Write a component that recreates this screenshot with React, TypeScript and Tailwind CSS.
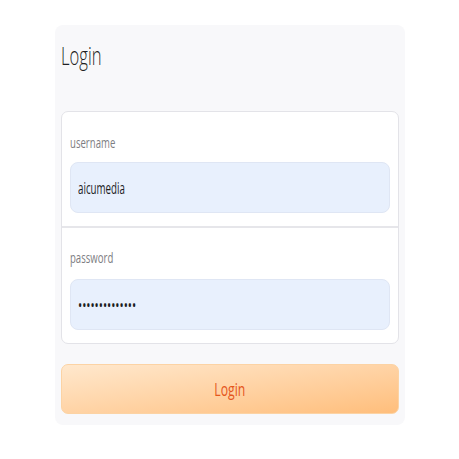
function Field({ label, value, top, gap, valueClass }: { label: string; value: string; top: string; gap: string; valueClass: string }) {
  return (
    <div className={`px-[8px] ${top} pb-[13px]`}>
      <div className="h-[20px] text-[15px] leading-[20px] text-[#7d7d82]">
        <span className="inline-block origin-left scale-x-[0.64] whitespace-nowrap">{label}</span>
      </div>
      <div className={`${gap} h-[51px] rounded-[8px] border border-[#dfe6f4] bg-[#e8f0fd] px-[7px] flex items-center`}>
        <span className={`inline-block origin-left whitespace-nowrap text-[16px] text-[#1d1d1f] ${valueClass}`}>{value}</span>
      </div>
    </div>
  );
}

export default function App() {
  return (
    <div className="min-h-[459px] bg-white pt-[25px]" style={{ fontFamily: '"Open Sans", "Noto Sans", sans-serif' }}>
      <div className="mx-auto w-[350px] rounded-[8px] bg-[#f8f8fa] px-[6px] pt-[14px] pb-[11px]">
        <h1 className="h-[32px] text-[26px] leading-[32px] font-light text-[#1f1f23]">
          <span className="inline-block origin-left scale-x-[0.64] whitespace-nowrap">Login</span>
        </h1>

        <div className="mt-[40px] rounded-[7px] border border-[#e3e3e8] bg-white">
          <Field label="username" value="aicumedia" top="pt-[20px]" gap="mt-[10px]" valueClass="scale-x-[0.61]" />
          <div className="h-[2px] bg-[#e6e6ea]" />
          <Field label="password" value="••••••••••••••" top="pt-[19px]" gap="mt-[12px]" valueClass="scale-x-[0.69]" />
        </div>

        <button className="mt-[20px] flex h-[50px] w-full items-center justify-center rounded-[7px] border border-[#fcd3a4] bg-gradient-to-br from-[#ffe8cd] to-[#ffbe7b] text-[18px] text-[#e5561c]">
          <span className="inline-block scale-x-[0.68] whitespace-nowrap">Login</span>
        </button>
      </div>
    </div>
  );
}
